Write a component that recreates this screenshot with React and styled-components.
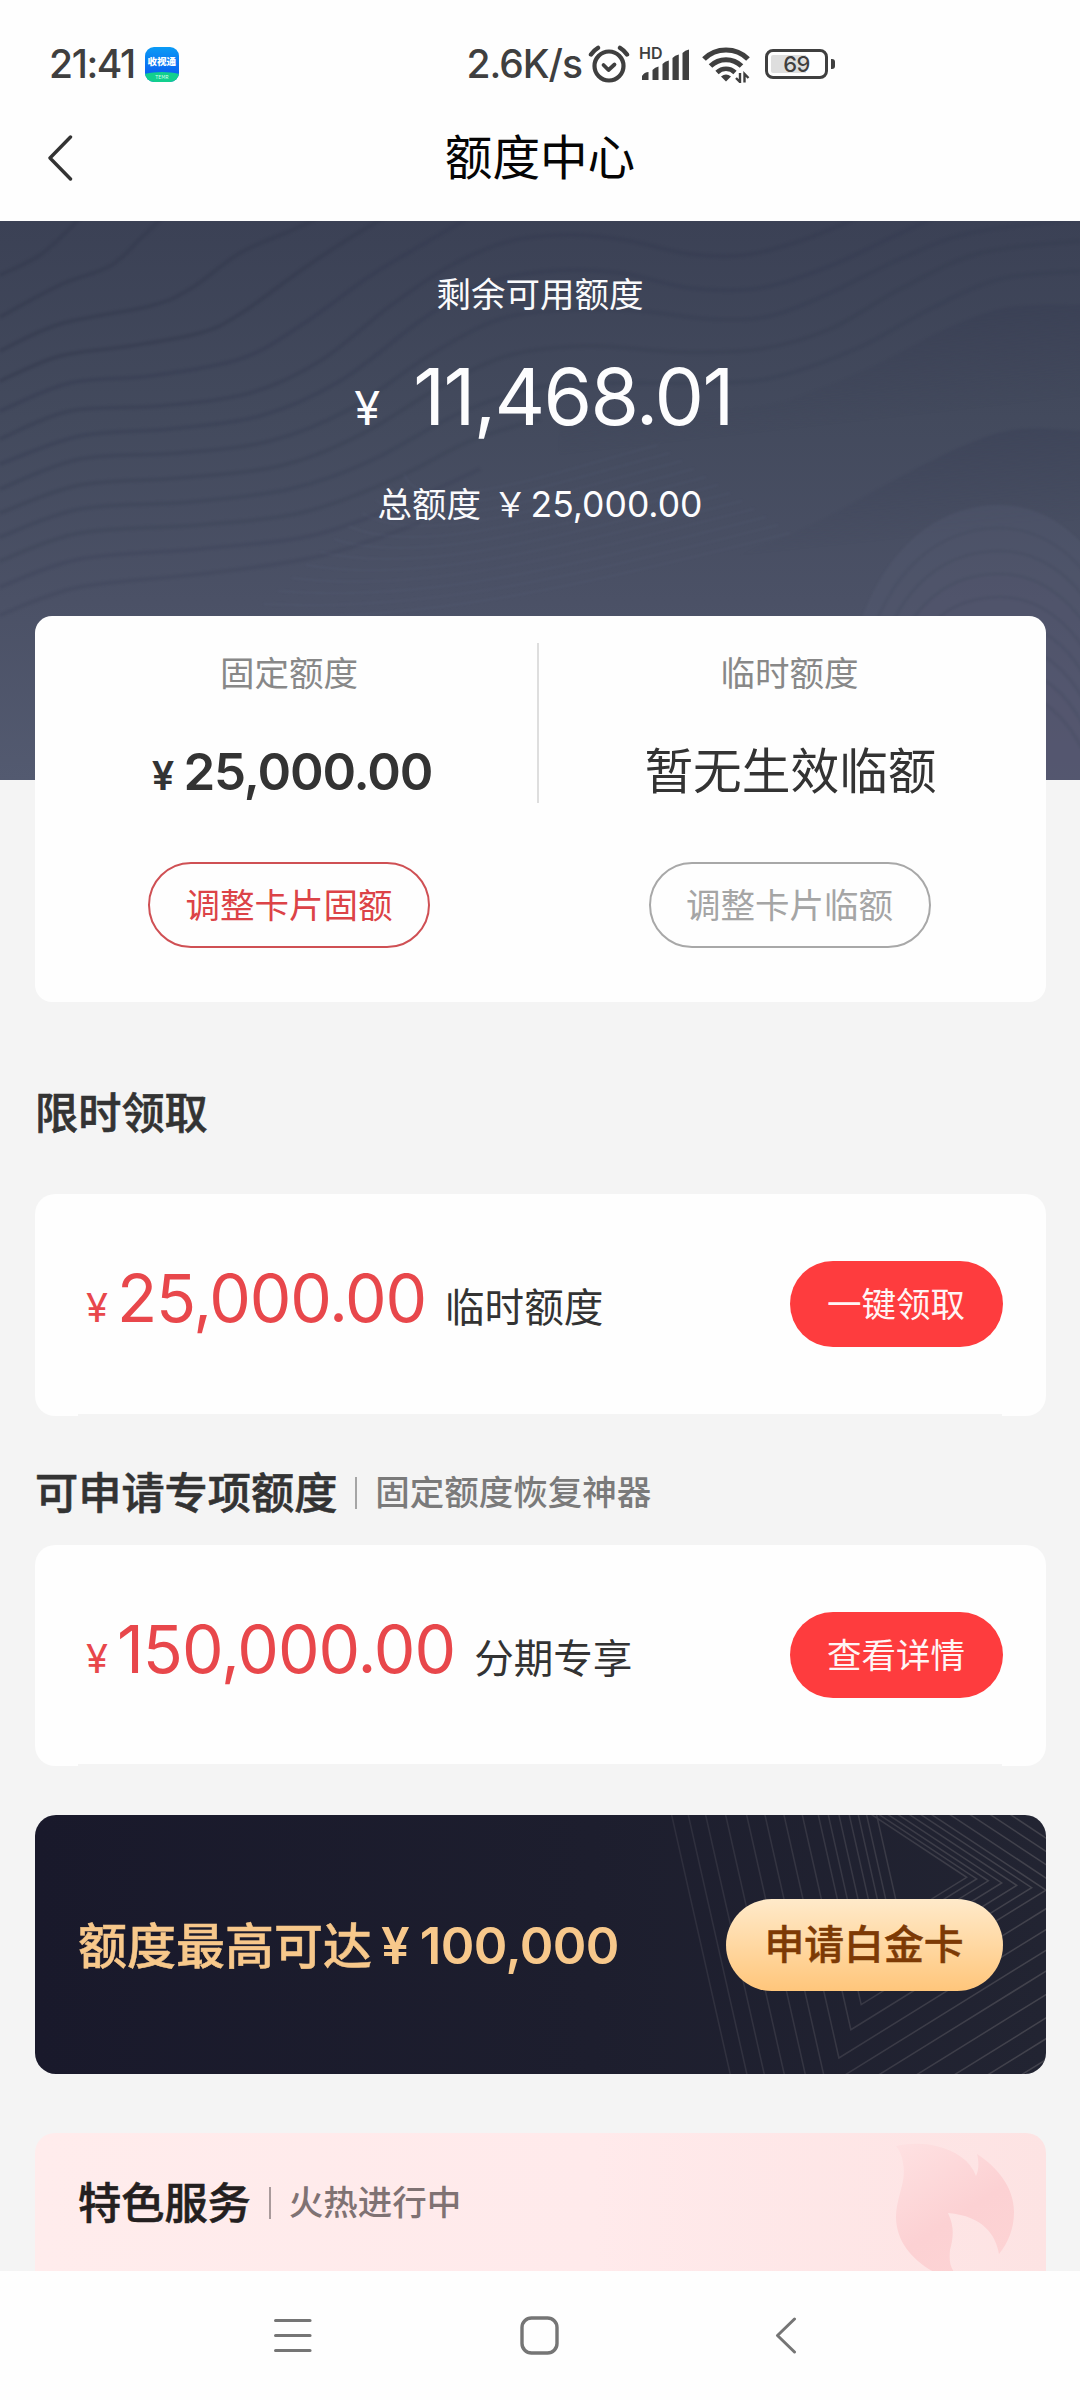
import React from "react";
import styled, { createGlobalStyle } from "styled-components";

const CJK = '"Noto Sans CJK SC", "Noto Sans", sans-serif';
const NUM = 'Inter, "Noto Sans CJK SC", sans-serif';

const GlobalStyle = createGlobalStyle`
  *, *::before, *::after { box-sizing: border-box; }
  body { margin: 0; background: #f4f4f4; font-family: ${CJK}; color: #333; }
  button { font-family: inherit; margin: 0; padding: 0; background: none; border: 0; }
  svg { display: block; flex: none; }
`;

const Screen = styled.div`
  width: 1080px;
  height: 2400px;
  overflow: hidden;
  display: flex;
  flex-direction: column;
  background: #f4f4f4;
`;

/* ---------- text ---------- */

const Label = styled.span`
  font-size: ${(p) => p.$size || 34.5}px;
  line-height: ${(p) => p.$line || 40}px;
  font-weight: ${(p) => p.$weight || 400};
  color: ${(p) => p.$color || "#333"};
  -webkit-text-stroke: ${(p) => p.$stroke || 0}px currentColor;
  white-space: nowrap;
`;

const Digits = styled.span`
  font-family: ${NUM};
  font-size: ${(p) => p.$size}px;
  line-height: ${(p) => p.$line || 40}px;
  font-weight: ${(p) => p.$weight || 400};
  letter-spacing: ${(p) => p.$track || 0}px;
  color: ${(p) => p.$color || "inherit"};
  white-space: nowrap;
`;

/* ---------- top bars ---------- */

const StatusBar = styled.div`
  height: 128px;
  flex: none;
  display: flex;
  align-items: flex-start;
  justify-content: space-between;
  padding: 44px 245px 0 49px;
  background: #fefefe;
  color: #3f3f3f;
`;

const StatusGroup = styled.div`
  display: flex;
  align-items: center;
  height: 40px;
  gap: ${(p) => p.$gap}px;
`;

const AppBadge = styled.div`
  width: 34px;
  height: 35px;
  border-radius: 9px;
  overflow: hidden;
  display: flex;
  flex-direction: column;
  justify-content: space-between;
  align-items: center;
  background: linear-gradient(#0a9bf5, #0a63f2 75%);
`;

const AppName = styled.span`
  margin-top: 8px;
  font-size: 9.5px;
  line-height: 13px;
  font-weight: 900;
  color: #fff;
  white-space: nowrap;
`;

const AppStrip = styled.span`
  width: 46px;
  height: 10px;
  border-radius: 50% 50% 0 0 / 60% 60% 0 0;
  background: #12cf8e;
  font-size: 5px;
  line-height: 10px;
  text-align: center;
  color: #d8fff0;
`;

const TitleBar = styled.header`
  height: 93px;
  flex: none;
  display: grid;
  grid-template-columns: 1fr auto 1fr;
  align-items: start;
  padding: 0 48px;
  background: #fefefe;
`;

const PageTitle = styled.h1`
  margin: 0;
  font-size: 47.6px;
  line-height: 53px;
  font-weight: 400;
  color: #050505;
`;

/* ---------- hero ---------- */

const Hero = styled.section`
  position: relative;
  height: 559px;
  flex: none;
  display: flex;
  flex-direction: column;
  align-items: center;
  padding-top: 51px;
  background: linear-gradient(#3b4155 0%, #434a5d 35%, #4b5166 68%, #535a70 100%);
  color: #fdfdfe;
`;

const HeroArt = styled.svg`
  position: absolute;
  inset: 0;
`;

const HeroRow = styled.div`
  position: relative;
  display: flex;
  align-items: baseline;
  justify-content: center;
  height: ${(p) => p.$height}px;
  margin-top: ${(p) => p.$top || 0}px;
  padding-left: ${(p) => p.$shift || 0}px;
  gap: ${(p) => p.$gap || 0}px;
`;

const TotalSum = styled.div`
  display: flex;
  align-items: baseline;
  gap: 3px;
  margin-left: 12px;
`;

/* ---------- content ---------- */

const Content = styled.main`
  position: relative;
  flex: none;
  height: 1655px;
  margin-top: -164px;
  padding: 0 34.5px 0 35px;
  display: flex;
  flex-direction: column;
`;

const LimitCard = styled.section`
  height: 386px;
  display: grid;
  grid-template-columns: 502px 2px 501px;
  background: #fefefe;
  border-radius: 17px;
`;

const LimitColumn = styled.div`
  display: flex;
  flex-direction: column;
  align-items: center;
  padding: 35px 0 0 ${(p) => p.$left || 0}px;
`;

const Divider = styled.div`
  height: 160px;
  margin-top: 27px;
  background: #dedede;
`;

const LimitValue = styled.div`
  height: 60px;
  margin: 47px 0 64px;
  padding-top: ${(p) => p.$drop || 0}px;
  padding-left: ${(p) => p.$shift || 0}px;
  display: flex;
  align-items: baseline;
  gap: 9px;
`;

const OutlineButton = styled.button`
  width: 282px;
  height: 86px;
  border: 2px solid ${(p) => p.$line};
  border-radius: 43px;
  padding-bottom: 4px;
  font-size: 34.5px;
  line-height: 40px;
  color: ${(p) => p.$ink};
`;

const SectionHead = styled.div`
  height: 60px;
  flex: none;
  margin: ${(p) => p.$top}px 0 ${(p) => p.$bottom}px;
  display: flex;
  align-items: center;
`;

const Bar = styled.i`
  width: 2px;
  height: 32px;
  margin: 5px 18px 0 18px;
  background: ${(p) => p.$color || "#a5a5a5"};
`;

const OfferCard = styled.section`
  height: ${(p) => p.$height}px;
  flex: none;
  display: flex;
  align-items: center;
  justify-content: space-between;
  padding: 0 43px 2px 51px;
  border-radius: 20px;
  background: linear-gradient(#f4f4f4, #f4f4f4) 43px 100% / 924px 2px no-repeat, #fefefe;
`;

const OfferText = styled.div`
  display: flex;
  align-items: baseline;
  padding-bottom: 12px;
`;

const OfferAmount = styled.div`
  display: flex;
  align-items: baseline;
  gap: 9px;
  margin-right: 19px;
  color: #e8474b;
`;

const RedButton = styled.button`
  width: 213px;
  height: 86px;
  border-radius: 43px;
  padding-bottom: 4px;
  background: #fe3c3e;
  color: #fff5f5;
  font-size: 34.5px;
  line-height: 40px;
`;

const Banner = styled.section`
  position: relative;
  height: 259px;
  flex: none;
  margin-top: 49px;
  border-radius: 21px;
  overflow: hidden;
  display: flex;
  align-items: center;
  justify-content: space-between;
  padding: 0 43px 0 43px;
  background: linear-gradient(90deg, #19192b, #1d1e2e 55%, #222432);
`;

const BannerArt = styled.svg`
  position: absolute;
  right: 0;
  top: 0;
`;

const BannerText = styled.div`
  position: relative;
  display: flex;
  align-items: baseline;
  color: #f7c88b;
`;

const BannerSum = styled.div`
  display: flex;
  align-items: baseline;
  gap: 10px;
  margin-left: 9px;
`;

const GoldButton = styled.button`
  position: relative;
  width: 277px;
  height: 92px;
  border-radius: 46px;
  padding-bottom: 6px;
  background: linear-gradient(#ffeaca, #ffc67b);
  color: #7d3a05;
  font-size: 39.8px;
  line-height: 46px;
  font-weight: 500;
  -webkit-text-stroke: 0.5px currentColor;
`;

const ServiceCard = styled.section`
  position: relative;
  height: 138px;
  flex: none;
  margin-top: 59px;
  padding: 37px 0 0 43px;
  border-radius: 20px 20px 0 0;
  overflow: hidden;
  background: linear-gradient(90deg, #ffecec, #ffeaeb 55%, #fde3e3);
  display: flex;
  align-items: flex-start;
`;

const ServiceHead = styled.div`
  display: flex;
  align-items: center;
  height: 60px;
`;

const FlameArt = styled.svg`
  position: absolute;
  right: 31px;
  top: 8px;
`;

const NavBar = styled.nav`
  height: 129px;
  flex: none;
  display: flex;
  align-items: flex-start;
  padding: 45px 0 0 274px;
  background: #fefefe;
`;

const NavGap = styled.span`
  width: ${(p) => p.$w}px;
`;

/* ---------- drawings ---------- */

const curve = (pts) => {
  let d = `M${pts[0][0]} ${pts[0][1]}`;
  for (let i = 0; i < pts.length - 1; i++) {
    const a = pts[i - 1] || pts[i];
    const b = pts[i];
    const c = pts[i + 1];
    const e = pts[i + 2] || c;
    d += `C${b[0] + (c[0] - a[0]) / 6} ${b[1] + (c[1] - a[1]) / 6} ${c[0] - (e[0] - b[0]) / 6} ${c[1] - (e[1] - b[1]) / 6} ${c[0]} ${c[1]}`;
  }
  return d;
};

const WAVES = [
  [[0, 54], [40, 34], [75, 2], [82, -8]],
  [[0, 96], [60, 64], [110, 45], [140, 18], [165, -6]],
  [[0, 130], [60, 103], [150, 85], [190, 68], [240, 32], [290, 10], [325, -6]],
  [[0, 160], [60, 135], [130, 125], [200, 112], [240, 93], [300, 50], [345, 20], [385, -4]],
  [[0, 190], [70, 162], [150, 155], [240, 138], [300, 105], [370, 55], [420, 25], [470, -4]],
  [[0, 218], [70, 190], [160, 185], [250, 172], [320, 140], [390, 85], [450, 45], [510, 20], [570, 14], [625, 19], [690, 33], [745, 34], [800, 20], [860, -4]],
  [[0, 243], [80, 215], [170, 208], [260, 195], [340, 160], [420, 100], [480, 64], [550, 50], [620, 52], [690, 67], [760, 67], [830, 45], [890, 17], [935, -4]],
  [[0, 268], [80, 238], [180, 232], [270, 220], [350, 188], [430, 134], [500, 98], [570, 89], [640, 90], [710, 98], [770, 95], [830, 72], [900, 38], [970, 12], [1080, -2]],
  [[0, 292], [80, 264], [180, 257], [280, 245], [360, 214], [440, 166], [510, 134], [590, 125], [680, 131], [760, 128], [830, 108], [900, 68], [980, 32], [1080, 20]],
  [[0, 316], [80, 288], [190, 281], [290, 268], [370, 240], [460, 192], [540, 166], [620, 162], [720, 162], [780, 155], [860, 126], [930, 88], [1000, 58], [1080, 50]],
  [[0, 340], [80, 312], [200, 304], [300, 292], [390, 260], [470, 220], [540, 198]],
  [[0, 366], [80, 338], [200, 328], [310, 315], [400, 284], [480, 248]],
  [[0, 394], [80, 366], [210, 352], [320, 335], [420, 302]],
];

const EDGE_A = [[560, 192], [660, 192], [760, 186], [820, 168], [880, 142], [950, 106], [1010, 86], [1085, 84]];
const EDGE_B = [[440, 420], [560, 392], [660, 364], [750, 330], [820, 300], [900, 256], [970, 222], [1020, 208], [1085, 210]];

const Waves = () => (
  <HeroArt width="1080" height="559" viewBox="0 0 1080 559">
    <defs>
      <linearGradient id="shadeA" x1="0" y1="0" x2="0.25" y2="1">
        <stop offset="0.15" stopColor="#383e53" stopOpacity="0.6" />
        <stop offset="0.6" stopColor="#3d4358" stopOpacity="0" />
      </linearGradient>
      <linearGradient id="shadeB" x1="0" y1="0" x2="0.25" y2="1">
        <stop offset="0.1" stopColor="#3a4056" stopOpacity="0.65" />
        <stop offset="0.55" stopColor="#3d4358" stopOpacity="0" />
      </linearGradient>
      <filter id="soft" x="-5%" y="-5%" width="110%" height="110%" colorInterpolationFilters="sRGB">
        <feGaussianBlur stdDeviation="1.2" />
      </filter>
    </defs>
    <g filter="url(#soft)">
      <g fill="none" stroke="#33394e" strokeWidth="4">
        {WAVES.map((pts, i) => (
          <path key={i} d={curve(pts)} opacity={i < 4 ? 0.5 : 0.42 - i * 0.02} />
        ))}
      </g>
      <path d={`${curve(EDGE_A)}L1085 320L560 320Z`} fill="url(#shadeA)" />
      <path d={`${curve(EDGE_B)}L1085 480L440 480Z`} fill="url(#shadeB)" />
      {[0, 1, 2, 3, 4, 5, 6, 7, 8].map((i) => (
        <path
          key={i}
          d={`M${834 + i * 15} 580C${834 + i * 12} ${370 + i * 16} ${910 + i * 5} ${284 + i * 23} 1000 ${284 + i * 23}C1040 ${284 + i * 23} 1070 ${308 + i * 24} 1085 ${326 + i * 26}L1085 580Z`}
          fill="#565d74"
          fillOpacity={i === 0 ? 0.35 : 0.08}
          stroke="#3f465a"
          strokeOpacity={i === 0 ? 0 : 0.25}
          strokeWidth="3"
        />
      ))}
      <g fill="none" stroke="#6a7190" strokeOpacity="0.1" strokeWidth="2">
        {Array.from({ length: 12 }, (_, i) => (
          <path key={i} d={`M${250 + i * 14} ${396 - i * 13}C420 ${400 - i * 9} 560 ${370 - i * 11} ${790 - i * 12} ${312 - i * 8}`} />
        ))}
      </g>
    </g>
  </HeroArt>
);

const LEFT_TOPS = [710, 680, 655, 628, 597, 565, 535, 487, 432, 375, 320, 257, 197, 145, 95];
const RIGHT_TIPS = [980, 1010, 1045, 1085, 1130, 1175, 1218, 1290, 1370, 1450, 1530, 1620, 1710, 1790, 1870];

const BannerLines = () => (
  <BannerArt width="406" height="259" viewBox="0 75 1218 777">
    <defs>
      <linearGradient id="fade" gradientUnits="userSpaceOnUse" x1="60" y1="0" x2="1218" y2="0">
        <stop offset="0" stopColor="#77747c" stopOpacity="0.17" />
        <stop offset="1" stopColor="#8a8687" stopOpacity="0.32" />
      </linearGradient>
    </defs>
    <g fill="none" stroke="url(#fade)" strokeWidth="4.5">
      {LEFT_TOPS.map((lx, i) => {
        const rx = RIGHT_TIPS[i];
        const ry = 262 + (rx - 980) * 0.16;
        const by = (ry + 0.62 * (rx - lx + 0.226 * 75)) / (1 + 0.62 * 0.226);
        const bx = lx + 0.226 * (by - 75);
        return <path key={lx} d={`M${lx - 3} 62L${bx} ${by}L${rx} ${ry}L${rx - (ry - 60) / 0.66} 60`} />;
      })}
    </g>
  </BannerArt>
);

const Flame = () => (
  <FlameArt width="120" height="130" viewBox="896 2141 120 130">
    <defs>
      <linearGradient id="flame" x1="0.1" y1="0" x2="0.7" y2="1">
        <stop offset="0" stopColor="#fee0e1" />
        <stop offset="0.6" stopColor="#fcd1d3" />
        <stop offset="1" stopColor="#fdd3d4" />
      </linearGradient>
    </defs>
    <path
      fill="url(#flame)"
      d="M897 2146C912 2143 925 2143 937 2146C957 2151 971 2160 977 2176C980 2170 980 2162 978 2154C998 2167 1015 2187 1015 2212C1015 2229 1009 2243 1000 2254C997 2236 985 2216 949 2213C956 2228 954 2238 951 2250C950 2260 951 2266 955 2272L935 2272C913 2260 897 2241 897 2217C897 2197 908 2182 904 2163C903 2156 901 2151 897 2146Z"
    />
  </FlameArt>
);

const BackIcon = styled.svg`
  margin-top: 7px;
`;

const BackArrow = () => (
  <BackIcon width="25" height="46" viewBox="0 0 25 46" fill="none" stroke="#333" strokeWidth="3.400" strokeLinecap="round" strokeLinejoin="round">
    <path d="M22.500 2L2 23L22.500 44" />
  </BackIcon>
);

const AlarmIcon = styled.svg`
  margin-left: 6px;
`;

const Alarm = () => (
  <AlarmIcon width="42" height="38" viewBox="0 0 42 38" fill="none" stroke="#3f3f3f" strokeLinecap="round" strokeLinejoin="round">
    <circle cx="21" cy="21" r="14.5" strokeWidth="4.2" />
    <path d="M15.5 20L20.5 25L26.5 19.5" strokeWidth="3.8" />
    <path d="M3 9.5C5 6.5 7 4.500 10 2.800M39 9.500C37 6.500 35 4.500 32 2.800" strokeWidth="4.400" />
  </AlarmIcon>
);

const SignalBox = styled.div`
  position: relative;
  width: 51px;
  height: 34px;
  margin-left: 9px;
`;

const SignalTag = styled.span`
  position: absolute;
  left: 0;
  top: -1px;
  font: 600 16px/15px ${NUM};
`;

const Signal = () => (
  <SignalBox>
    <svg width="51" height="34" viewBox="0 0 51 34" fill="#3f3f3f">
      <path d="M3 29Q5.500 25 9.500 25V33H3ZM13.500 23Q16 20 19.500 19.500V33H13.500ZM23.500 17Q26 14 29.800 13.500V33H23.500ZM33.500 11Q36 8 39.800 7.500V33H33.500ZM43.500 6Q46 3 50 2.500V33H43.500Z" />
    </svg>
    <SignalTag>HD</SignalTag>
  </SignalBox>
);

const WifiBox = styled.svg`
  margin-left: 11px;
`;

const Wifi = () => (
  <WifiBox width="50" height="38" viewBox="0 0 50 38" fill="none" stroke="#3f3f3f">
    <path d="M3 14C15 2 35 2 47 14" strokeWidth="5.200" />
    <path d="M9.500 21C18 12.500 32 12.500 40.500 21" strokeWidth="5" />
    <path d="M16 27.500C21 22.500 29 22.500 34 27.500" strokeWidth="4.600" />
    <path d="M20 31.500Q25 27.500 30 31.500L25 36.500Z" fill="#3f3f3f" stroke="none" />
    <path d="M39 28V37L35 33M43.500 37.500V29L47.500 33" strokeWidth="2.400" />
  </WifiBox>
);

const BatteryBody = styled.div`
  width: 63px;
  height: 30px;
  margin-left: 14px;
  border: 3px solid #3f3f3f;
  border-radius: 8px;
  padding: 3px;
`;

const BatteryFill = styled.div`
  height: 18px;
  border-radius: 2px;
  background: linear-gradient(90deg, #dedede 69%, transparent 69%);
  text-align: center;
  font: 500 22px/19px ${NUM};
  letter-spacing: -0.5px;
`;

const BatteryNub = styled.i`
  width: 4px;
  height: 10px;
  margin-left: 3px;
  border-radius: 0 3px 3px 0;
  background: #3f3f3f;
`;

export default function App() {
  return (
    <>
      <GlobalStyle />
      <Screen>
        <StatusBar>
          <StatusGroup $gap={10}>
            <Digits $size={39} $weight={500} $track={-1.4}>21:41</Digits>
            <AppBadge>
              <AppName>收视通</AppName>
              <AppStrip>TEMR</AppStrip>
            </AppBadge>
          </StatusGroup>
          <StatusGroup $gap={0}>
            <Digits $size={39} $weight={500} $track={-1}>2.6K/s</Digits>
            <Alarm />
            <Signal />
            <Wifi />
            <BatteryBody>
              <BatteryFill>69</BatteryFill>
            </BatteryBody>
            <BatteryNub />
          </StatusGroup>
        </StatusBar>
        <TitleBar>
          <BackArrow />
          <PageTitle>额度中心</PageTitle>
        </TitleBar>

        <Hero>
          <Waves />
          <HeroRow $height={40}>
            <Label $color="#fafafc">剩余可用额度</Label>
          </HeroRow>
          <HeroRow $height={80} $top={45} $gap={33} $shift={7}>
            <Digits $size={47}>¥</Digits>
            <Digits $size={78.500} $line={80} $track={-1.7}>11,468.01</Digits>
          </HeroRow>
          <HeroRow $height={40} $top={45}>
            <Label $color="#fafafc">总额度</Label>
            <TotalSum>
              <Label $color="#fafafc">￥</Label>
              <Digits $size={35.500}>25,000.00</Digits>
            </TotalSum>
          </HeroRow>
        </Hero>

        <Content>
          <LimitCard>
            <LimitColumn $left={6}>
              <Label $color="#888">固定额度</Label>
              <LimitValue $drop={4} $shift={6}>
                <Digits $size={40} $weight={600}>¥</Digits>
                <Digits $size={51} $weight={600} $line={60} $track={-1.15}>25,000.00</Digits>
              </LimitValue>
              <OutlineButton $line="#cf5054" $ink="#dc4347">调整卡片固额</OutlineButton>
            </LimitColumn>
            <Divider />
            <LimitColumn>
              <Label $color="#888">临时额度</Label>
              <LimitValue $shift={2}>
                <Label $size={48.700} $line={60}>暂无生效临额</Label>
              </LimitValue>
              <OutlineButton $line="#a8a8a8" $ink="#a5a5a5">调整卡片临额</OutlineButton>
            </LimitColumn>
          </LimitCard>

          <SectionHead $top={78} $bottom={54}>
            <Label $size={43.200} $line={50} $weight={500} $stroke={0.6}>限时领取</Label>
          </SectionHead>
          <OfferCard $height={222}>
            <OfferText>
              <OfferAmount>
                <Digits $size={40}>¥</Digits>
                <Digits $size={66} $line={80} $track={-1.2}>25,000.00</Digits>
              </OfferAmount>
              <Label $size={39.600}>临时额度</Label>
            </OfferText>
            <RedButton>一键领取</RedButton>
          </OfferCard>

          <SectionHead $top={44} $bottom={25}>
            <Label $size={43.200} $line={50} $weight={500} $stroke={0.6}>可申请专项额度</Label>
            <Bar />
            <Label $size={34.500} $weight={500} $color="#7a7a7a">固定额度恢复神器</Label>
          </SectionHead>
          <OfferCard $height={221}>
            <OfferText>
              <OfferAmount>
                <Digits $size={40}>¥</Digits>
                <Digits $size={66} $line={80} $track={-1}>150,000.00</Digits>
              </OfferAmount>
              <Label $size={39.600}>分期专享</Label>
            </OfferText>
            <RedButton>查看详情</RedButton>
          </OfferCard>

          <Banner>
            <BannerLines />
            <BannerText>
              <Label $size={49} $line={60} $weight={500} $stroke={0.5} $color="inherit">额度最高可达</Label>
              <BannerSum>
                <Digits $size={51} $weight={600} $line={60}>¥</Digits>
                <Digits $size={51} $weight={600} $line={60} $track={-0.6}>100,000</Digits>
              </BannerSum>
            </BannerText>
            <GoldButton>申请白金卡</GoldButton>
          </Banner>

          <ServiceCard>
            <ServiceHead>
              <Label $size={43.200} $line={50} $weight={500} $stroke={0.6} $color="#241f20">特色服务</Label>
              <Bar $color="#a99a9b" />
              <Label $size={34.500} $weight={500} $color="#7f7273">火热进行中</Label>
            </ServiceHead>
            <Flame />
          </ServiceCard>
        </Content>

        <NavBar>
          <svg width="38" height="38" viewBox="0 0 38 38" stroke="#757575" strokeWidth="3.200" strokeLinecap="round">
            <path d="M1.600 4.500H36M1.600 19.500H36M1.600 34.500H36" />
          </svg>
          <NavGap $w={208} />
          <svg width="39" height="39" viewBox="0 0 39 39" fill="none" stroke="#757575" strokeWidth="3.400">
            <rect x="2" y="2" width="35" height="35" rx="9.500" />
          </svg>
          <NavGap $w={216} />
          <svg width="22" height="38" viewBox="0 0 22 38" fill="none" stroke="#757575" strokeWidth="3" strokeLinecap="round" strokeLinejoin="round">
            <path d="M19.500 3L2.500 19.500L19.500 36" />
          </svg>
        </NavBar>
      </Screen>
    </>
  );
}
